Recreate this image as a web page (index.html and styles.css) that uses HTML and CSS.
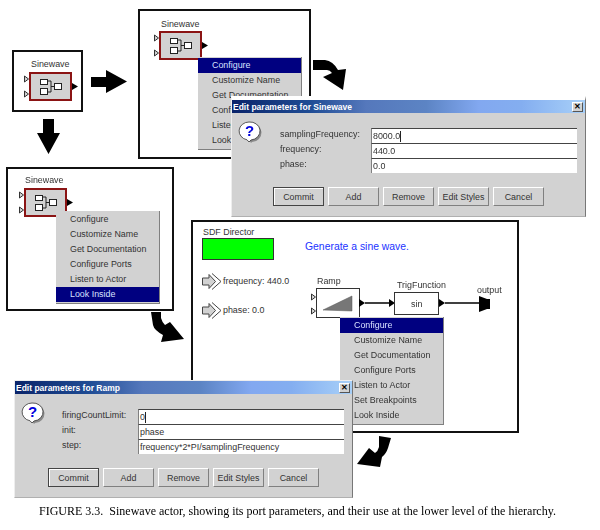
FILE: index.html
```html
<!DOCTYPE html>
<html lang="en">
<head>
    <meta charset="UTF-8">
    <title>Figure 3.3</title>
    <link rel="stylesheet" href="styles.css">
</head>
<body>
    <!-- shared drawings -->
    <svg class="defs" width="0" height="0">
        <symbol id="actor" viewBox="0 0 56 32">
            <rect x="6" y="2" width="41" height="27" fill="#d2d2d2" stroke="#8b1414" stroke-width="2"/>
            <path d="M24 10H27V21H24M27 15.500H30" fill="none" stroke="#222"/>
            <rect x="16.500" y="8.500" width="7" height="5" fill="#fff" stroke="#222"/>
            <rect x="16.500" y="17.500" width="7" height="6" fill="#fff" stroke="#222"/>
            <rect x="30.500" y="12.500" width="7" height="6" fill="#fff" stroke="#222"/>
            <path d="M0.500 5V11L4.500 8Z M0.500 20V26L4.500 23Z" fill="#d2d2d2" stroke="#333"/>
            <path d="M48 12V19L54 15.500Z" fill="#000"/>
        </symbol>
        <symbol id="help" viewBox="0 0 24 22">
            <path d="M13 2A10 9.500 0 0 1 14 21L13 22L11 19A10 9.500 0 0 1 13 2Z" fill="#8a8a8a"/>
            <path d="M11 1A10 9 0 0 1 13 19L11 21L9 18.800A10 9 0 0 1 11 1Z" fill="#fff" stroke="#333" stroke-width="0.800"/>
        </symbol>
        <symbol id="port-param" viewBox="0 0 20 18">
            <path d="M0.500 5H7V1.500L13.500 8.500L7 15.500V12H0.500Z" fill="#d2d2d2" stroke="#444"/>
            <path d="M10 0.500L19 8.500L10 16.500" fill="none" stroke="#444"/>
        </symbol>
    </svg>

    <div class="figure">
        <section class="panel panel-a">
            <span class="actor-name name-a">Sinewave</span>
            <svg class="actor actor-a"><use href="#actor"/></svg>
        </section>

        <section class="panel panel-b">
            <span class="actor-name name-b">Sinewave</span>
            <svg class="actor actor-b"><use href="#actor"/></svg>
            <ul class="menu menu-b">
                <li class="selected">Configure</li>
                <li>Customize Name</li>
                <li>Get Documentation</li>
                <li>Configure Ports</li>
                <li>Listen to Actor</li>
                <li>Look Inside</li>
            </ul>
        </section>

        <section class="panel panel-c">
            <span class="actor-name name-c">Sinewave</span>
            <svg class="actor actor-c"><use href="#actor"/></svg>
            <ul class="menu menu-c">
                <li>Configure</li>
                <li>Customize Name</li>
                <li>Get Documentation</li>
                <li>Configure Ports</li>
                <li>Listen to Actor</li>
                <li class="selected">Look Inside</li>
            </ul>
        </section>

        <section class="panel panel-d">
            <span class="label director-name">SDF Director</span>
            <div class="director"></div>
            <span class="annotation">Generate a sine wave.</span>

            <svg class="port-icon port-freq"><use href="#port-param"/></svg>
            <span class="label param-freq">frequency: 440.0</span>
            <svg class="port-icon port-phase"><use href="#port-param"/></svg>
            <span class="label param-phase">phase: 0.0</span>

            <!-- wires, ramp and output, in panel coordinates -->
            <svg class="wiring" width="324" height="209">
                <path d="M118.500 72V78L122.500 75Z M118.500 86V92L122.500 89Z" fill="#d2d2d2" stroke="#333"/>
                <rect x="123.500" y="66.500" width="43" height="29" fill="#fff" stroke="#333"/>
                <path d="M130 88L159 74V89Z" fill="#777" stroke="#555" stroke-width="0.500"/>
                <path d="M166 77V85L172 81Z" fill="#000"/>
                <path d="M172 81H198" stroke="#000" stroke-width="1.500"/>
                <path d="M196 77V85L202 81Z" fill="#000"/>
                <rect x="201.500" y="70.500" width="44" height="22" fill="#fff" stroke="#333"/>
                <path d="M246 77V85L252 81Z" fill="#000"/>
                <path d="M252 81H288" stroke="#000" stroke-width="1.500"/>
                <path d="M286 74L294 77H297V87H294L286 90Z" fill="#000"/>
            </svg>
            <span class="label ramp-name">Ramp</span>
            <span class="label trig-name">TrigFunction</span>
            <span class="label trig-sin">sin</span>
            <span class="label output-name">output</span>

            <ul class="menu menu-d">
                <li class="selected">Configure</li>
                <li>Customize Name</li>
                <li>Get Documentation</li>
                <li>Configure Ports</li>
                <li>Listen to Actor</li>
                <li>Set Breakpoints</li>
                <li>Look Inside</li>
            </ul>
        </section>

        <div class="dialog dialog-sine">
            <div class="title-bar">
                <span>Edit parameters for Sinewave</span>
                <span class="close">&#x2715;</span>
            </div>
            <div class="dialog-body">
                <div class="help">
                    <svg width="24" height="22"><use href="#help"/></svg>
                    <span class="help-mark">?</span>
                </div>
                <div class="fields">
                    <label>samplingFrequency:</label><div class="field">8000.0<i class="caret"></i></div>
                    <label>frequency:</label><div class="field">440.0</div>
                    <label>phase:</label><div class="field">0.0</div>
                </div>
            </div>
            <div class="buttons">
                <button class="default">Commit</button>
                <button>Add</button>
                <button>Remove</button>
                <button>Edit Styles</button>
                <button>Cancel</button>
            </div>
        </div>

        <div class="dialog dialog-ramp">
            <div class="title-bar">
                <span>Edit parameters for Ramp</span>
                <span class="close">&#x2715;</span>
            </div>
            <div class="dialog-body">
                <div class="help">
                    <svg width="24" height="22"><use href="#help"/></svg>
                    <span class="help-mark">?</span>
                </div>
                <div class="fields">
                    <label>firingCountLimit:</label><div class="field">0<i class="caret"></i></div>
                    <label>init:</label><div class="field">phase</div>
                    <label>step:</label><div class="field">frequency*2*PI/samplingFrequency</div>
                </div>
            </div>
            <div class="buttons">
                <button class="default">Commit</button>
                <button>Add</button>
                <button>Remove</button>
                <button>Edit Styles</button>
                <button>Cancel</button>
            </div>
        </div>

        <!-- big black arrows between the steps, in page coordinates -->
        <svg class="arrows" width="600" height="530">
            <path d="M91 77H106V70L127 81.500L106 93V87H91Z"/>
            <path d="M43 119H54V133H60L48.500 154L37 133H43Z"/>
            <path d="M313 60H325Q333 61 338 70L346 69L343 90L323 77L332 73Q330 70 327 70H313Z"/>
            <path d="M151 312H161V318Q162 322 165 325L170 322L184 339L161 342L163 335Q154 330 153 325Z"/>
            <path d="M379 436L391 438L388 448Q386 454 382 457L380 467L357 464L369 448L375 453Q378 451 379 447Z"/>
        </svg>

        <p class="caption">FIGURE 3.3.&nbsp; Sinewave actor, showing its port parameters, and their use at the lower level of the hierarchy.</p>
    </div>
</body>
</html>
```

FILE: styles.css
```css
* {
    box-sizing: border-box;
}

body {
    margin: 0;
    background-color: #ffffff;
    font-family: "Liberation Sans", Arial, sans-serif;
    font-size: 8.9px;
    color: #333333;
}

.defs {
    position: absolute;
}

/* the source is a scaled-down scan, so everything is a little soft */
.figure {
    position: relative;
    width: 600px;
    height: 530px;
    overflow: hidden;
    filter: blur(0.35px);
}

/* screenshots pasted on the figure */
.panel {
    position: absolute;
    background-color: #ffffff;
    border: 2px solid #111111;
}

.panel-a { left: 12px; top: 50px; width: 71px; height: 62px; }
.panel-b { left: 138px; top: 9px; width: 173px; height: 150px; }
.panel-c { left: 6px; top: 167px; width: 168px; height: 144px; }
.panel-d { left: 191px; top: 220px; width: 328px; height: 213px; }

.actor {
    position: absolute;
    width: 56px;
    height: 32px;
}

.actor-a { left: 10px; top: 19px; }
.actor-b { left: 14px; top: 19px; }
.actor-c { left: 11px; top: 18px; }

.actor-name,
.label {
    position: absolute;
    line-height: 11px;
    white-space: nowrap;
}

.name-a { left: 17px; top: 7px; }
.name-b { left: 21px; top: 8px; }
.name-c { left: 17px; top: 6px; }

/* context menus */
.menu {
    position: absolute;
    width: 104px;
    margin: 0;
    padding: 1px 0;
    list-style: none;
    background-color: #d2d2d2;
    border-right: 1px solid #808080;
    border-bottom: 1px solid #808080;
}

.menu li {
    height: 15px;
    padding-left: 14px;
    line-height: 15px;
    white-space: nowrap;
}

.menu .selected {
    background-color: #000080;
    color: #d8e0ff;
}

.menu-b { left: 58px; top: 46px; }
.menu-c { left: 48px; top: 42px; }
.menu-d { left: 147px; top: 95px; }

/* inside the model */
.director-name { left: 10px; top: 5px; }

.director {
    position: absolute;
    left: 9px;
    top: 16px;
    width: 72px;
    height: 22px;
    background-color: #00ff00;
    border: 1px solid #333333;
}

.annotation {
    position: absolute;
    left: 112px;
    top: 18px;
    line-height: 13px;
    font-size: 10.4px;
    color: #2233ff;
}

.port-icon {
    position: absolute;
    width: 20px;
    height: 18px;
}

.port-freq { left: 9px; top: 51px; }
.port-phase { left: 9px; top: 80px; }
.param-freq { left: 30px; top: 54px; }
.param-phase { left: 30px; top: 83px; }

.wiring {
    position: absolute;
    left: 0;
    top: 0;
}

.ramp-name { left: 124px; top: 54px; }
.trig-name { left: 204px; top: 58px; }
.trig-sin { left: 218px; top: 77px; }
.output-name { left: 284px; top: 63px; }

/* dialogs */
.dialog {
    position: absolute;
    display: flex;
    flex-direction: column;
    background-color: #d2d2d2;
    border-top: 1px solid #eeeeee;
    border-left: 1px solid #eeeeee;
    border-right: 1px solid #777777;
    border-bottom: 1px solid #b0b0b0;
}

.dialog-sine { left: 231px; top: 96px; width: 355px; height: 121px; border-top: 4px solid #ffffff; }
.dialog-ramp { left: 14px; top: 380px; width: 339px; height: 118px; }

.title-bar {
    display: flex;
    justify-content: space-between;
    align-items: center;
    height: 13px;
    padding: 0 2px 0 1px;
    background: linear-gradient(to right, #0a246a 0%, #1f4c94 22%, #5578bc 38%, #5c84c4 55%, #82a8f0 70%, #84aef0 82%, #a8d0f8 100%);
    font-size: 8.5px;
    font-weight: bold;
    color: #ffffff;
}

.close {
    display: flex;
    justify-content: center;
    align-items: center;
    width: 11px;
    height: 10px;
    background-color: #d2d2d2;
    border: 1px solid #555555;
    border-top-color: #ffffff;
    border-left-color: #ffffff;
    font-size: 8px;
    color: #000000;
}

.dialog-body {
    position: relative;
    display: flex;
    justify-content: flex-end;
    padding: 15px 8px 0 0;
}

.help {
    position: absolute;
    left: 6px;
    top: 8px;
    width: 24px;
    height: 22px;
}

.help-mark {
    position: absolute;
    left: 7px;
    top: 1px;
    font-size: 15px;
    line-height: 17px;
    font-weight: bold;
    color: #0000dd;
}

.fields {
    display: grid;
    grid-auto-rows: 15px;
    align-items: center;
}

.dialog-sine .fields { grid-template-columns: 91px 206px; }
.dialog-ramp .fields { grid-template-columns: 76px 206px; }

.fields label {
    padding-bottom: 3px;
}

.field {
    display: flex;
    align-items: center;
    height: 15px;
    padding-left: 1px;
    background-color: #ffffff;
    border-top: 1px solid #444444;
    border-left: 1px solid #808080;
    white-space: nowrap;
}

.caret {
    width: 1px;
    height: 11px;
    background-color: #222222;
}

.buttons {
    display: flex;
    justify-content: center;
    gap: 4px;
    margin-top: 14px;
}

button {
    width: 51px;
    height: 19px;
    padding: 0;
    background-color: #d2d2d2;
    border: 1px solid #808080;
    border-top-color: #ffffff;
    border-left-color: #ffffff;
    font-family: inherit;
    font-size: 8.9px;
    color: #333333;
}

button.default {
    border-color: #444444;
    box-shadow: inset 1px 1px 0 #ffffff;
}

.arrows {
    position: absolute;
    left: 0;
    top: 0;
    fill: #000000;
}

.caption {
    position: absolute;
    left: 39px;
    top: 505px;
    margin: 0;
    font-family: "Liberation Serif", "Times New Roman", serif;
    font-size: 12px;
    line-height: 12px;
    color: #000000;
    white-space: nowrap;
}
```
